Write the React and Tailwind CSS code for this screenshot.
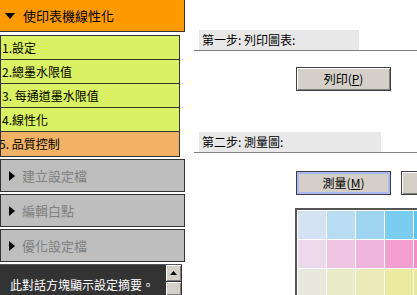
import React from "react";

const font = { fontFamily: '"Noto Sans CJK TC", "Noto Sans", sans-serif' };

const steps = [
  { label: "1.設定" },
  { label: "2.總墨水限值" },
  { label: "3. 每通道墨水限值" },
  { label: "4.線性化" },
  { label: "5. 品質控制", active: true },
];

const sections = ["建立設定檔", "編輯白點", "優化設定檔"];

const chart = [
  ["#d3e3f3", "#b8dcf2", "#9fd4f0", "#7acdef", "#5bc4ee"],
  ["#ecd9ec", "#f0c4e2", "#f0b4dc", "#f3a0d0", "#f58cc8"],
  ["#e8e8dc", "#eaecc8", "#eaeab8", "#eaea9f", "#e8e89a"],
];

const Arrow = ({ down }) => (
  <svg width="10" height="10" viewBox="0 0 10 10" className="shrink-0">
    {down ? <path d="M0 2 L10 2 L5 8 Z" fill="#000" /> : <path d="M2 0 L8 5 L2 10 Z" fill="#000" />}
  </svg>
);

const WinButton = ({ children, focused }) => (
  <button
    className={
      "h-[24px] w-[95px] bg-[#d4d0c8] text-[12px] text-black border " +
      (focused
        ? "border-[#404040] shadow-[inset_0_0_0_2px_#a8b8f0]"
        : "border-[#404040] shadow-[inset_1px_1px_0_#fff,inset_-1px_-1px_0_#808080]")
    }
  >
    {children}
  </button>
);

const Step = ({ text, width }) => (
  <div className="border-b border-[#808080]">
    <div className={"ml-[5px] h-[20px] bg-[#e8e8e8] px-[3px] text-[12px] leading-[20px] text-black " + width}>
      {text}
    </div>
  </div>
);

export default function App() {
  return (
    <div className="flex h-[295px] w-[417px] overflow-hidden bg-white" style={font}>
      {/* left navigation */}
      <div className="flex w-[185px] shrink-0 flex-col">
        <div className="flex h-[32px] items-center gap-[8px] border-r border-b border-[#333] bg-[#ff9900] pl-[5px] text-[13px] text-black">
          <Arrow down />
          <span>使印表機線性化</span>
        </div>

        <div className="mt-[3px] w-[180px] border border-[#333]">
          {steps.map((s, i) => (
            <div
              key={i}
              className={
                "flex h-[24px] items-center overflow-hidden text-[12px] text-black " +
                (i < steps.length - 1 ? "border-b border-[#333] " : "") +
                (s.active ? "bg-[#f2b266]" : "bg-[#d9f163]")
              }
            >
              <span className={s.active ? "-ml-[2px]" : "pl-[1px]"}>{s.label}</span>
            </div>
          ))}
        </div>

        <div className="mt-[2px] flex flex-col gap-[2px]">
          {sections.map((t) => (
            <div key={t} className="flex h-[33px] items-center gap-[5px] border border-[#333] bg-[#bebebe] pl-[6px] text-[13px] text-[#808080]">
              <Arrow />
              <span>{t}</span>
            </div>
          ))}
        </div>

        <div className="mt-[2px] flex flex-1 w-[182px] border-t border-[#555] bg-[#333]">
          <div className="flex-1 pl-[10px] pt-[11px] text-[12px] text-white">此對話方塊顯示設定摘要。</div>
          <div className="flex w-[16px] flex-col pr-[1px]">
            <div className="flex h-[16px] items-center justify-center bg-[#d4d0c8] shadow-[inset_1px_1px_0_#fff,inset_-1px_-1px_0_#808080]">
              <svg width="7" height="4" viewBox="0 0 7 4">
                <path d="M0 4 L3.5 0 L7 4 Z" fill="#000" />
              </svg>
            </div>
            <div className="mt-[1px] flex-1 bg-[#d4d0c8] shadow-[inset_1px_1px_0_#fff,inset_-1px_-1px_0_#808080]" />
          </div>
        </div>
      </div>

      {/* right content */}
      <div className="flex flex-1 flex-col pl-[9px] pt-[30px]">
        <Step text="第一步: 列印圖表:" width="w-[160px]" />
        <div className="mt-[14px] ml-[102px]">
          <WinButton>
            列印(<span className="underline">P</span>)
          </WinButton>
        </div>

        <div className="mt-[41px]">
          <Step text="第二步: 測量圖:" width="w-[182px]" />
        </div>
        <div className="mt-[18px] ml-[102px] flex gap-[10px]">
          <WinButton focused>
            測量(<span className="underline">M</span>)
          </WinButton>
          <WinButton> </WinButton>
        </div>

        <div className="mt-[13px] ml-[101px] border-t-2 border-l-2 border-[#555] bg-white">
          <div className="grid grid-cols-[repeat(5,28px)] gap-px pt-px pl-px">
            {chart.flat().map((c, i) => (
              <div key={i} className="h-[28px] w-[28px]" style={{ backgroundColor: c }} />
            ))}
          </div>
        </div>
      </div>
    </div>
  );
}
